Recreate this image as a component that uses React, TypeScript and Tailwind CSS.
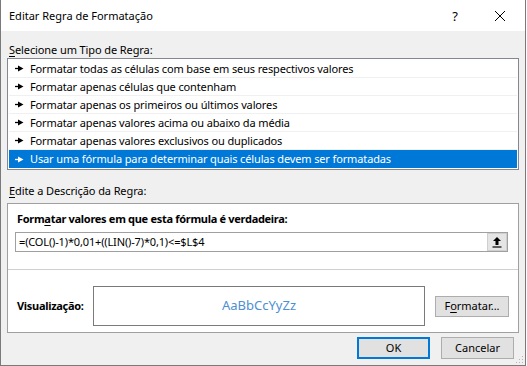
import React from "react";

const rows = [
  "Formatar todas as células com base em seus respectivos valores",
  "Formatar apenas células que contenham",
  "Formatar apenas os primeiros ou últimos valores",
  "Formatar apenas valores acima ou abaixo da média",
  "Formatar apenas valores exclusivos ou duplicados",
  "Usar uma fórmula para determinar quais células devem ser formatadas",
];

function Arrow({ color }: { color: string }) {
  return (
    <svg width="9" height="7" viewBox="0 0 9 7" className="shrink-0">
      <path d="M0 3.5H4" stroke={color} strokeWidth="1.3" />
      <path d="M3 0.5L8.5 3.5L3 6.5Z" fill={color} />
    </svg>
  );
}

export default function App() {
  const font = { fontFamily: '"Noto Sans", "Segoe UI", sans-serif' };
  return (
    <div
      className="w-[526px] h-[366px] bg-[#f0f0f0] border-l border-r border-b border-[#7a7a7a] flex flex-col text-[11px] text-black relative"
      style={font}
    >
      {/* title bar */}
      <div className="h-[31px] bg-white flex items-center pl-[8px] shrink-0">
        <span className="text-[11px] leading-[16px]">Editar Regra de Formatação</span>
        <span className="ml-auto w-[12px] text-center text-[13px] leading-[16px]">?</span>
        <div className="ml-[33px] mr-[19px] w-[12px] h-[12px] flex items-center justify-center">
          <svg width="12" height="12" viewBox="0 0 12 12">
            <path d="M1 1L11 11M11 1L1 11" stroke="#000" strokeWidth="1" />
          </svg>
        </div>
      </div>

      <div className="flex flex-col px-[6px]">
        <div className="mt-[11px] leading-[16px] pl-[2px] tracking-[-0.1px]">
          <span className="underline underline-offset-2">S</span>elecione um Tipo de Regra:
        </div>
        <div className="border border-[#828790] bg-white p-[1px] flex flex-col">
          {rows.map((r, i) => {
            const sel = i === rows.length - 1;
            return (
              <div
                key={i}
                className={
                  "h-[18px] flex items-center pl-[6px] gap-[6px] leading-[16px] tracking-[-0.13px] " +
                  (sel ? "bg-[#0078d7] text-white" : "border-b border-[#f0f0f0]")
                }
              >
                <Arrow color={sel ? "#ffffff" : "#000000"} />
                <span>{r}</span>
              </div>
            );
          })}
        </div>

        <div className="mt-[13px] leading-[16px] pl-[2px] tracking-[-0.1px]">
          <span className="underline underline-offset-2">E</span>dite a Descrição da Regra:
        </div>
        <div className="mt-[4px] h-[130px] border border-[#a0a0a0] bg-white flex flex-col">
          <div className="pt-[7px] pl-[9px] font-bold leading-[16px] tracking-[-0.3px]">
            Form<span className="underline underline-offset-2">a</span>tar valores em que esta fórmula é verdadeira:
          </div>
          <div className="mt-[5px] ml-[7px] mr-[10px] h-[20px] border border-[#a0a0a0] flex items-center">
            <span className="pl-[3px] leading-[16px] tracking-[-0.15px]">=(COL()-1)*0,01+((LIN()-7)*0,1)&lt;=$L$4</span>
            <div className="ml-auto w-[20px] h-[18px] bg-[#e5e5e5] border border-[#cfcfcf] flex items-center justify-center">
              <svg width="10" height="12" viewBox="0 0 10 12">
                <path d="M5 1L1 5H3.5V9H6.5V5H9Z" fill="#000" />
                <path d="M0.5 11H9.5" stroke="#000" strokeWidth="1.2" />
              </svg>
            </div>
          </div>
          <div className="mt-[17px] h-[1px] bg-[#d0d0d0]" />
          <div className="flex items-center pl-[9px] mt-[16px]">
            <span className="font-bold leading-[16px] w-[76px] tracking-[-0.3px]">Visualização:</span>
            <div className="w-[332px] h-[40px] border border-[#7a7a7a] flex items-center justify-center text-[#4c8fd3] text-[13px]">
              AaBbCcYyZz
            </div>
            <div className="ml-[10px] w-[74px] h-[21px] bg-[#e1e1e1] border border-[#adadad] flex items-center justify-center leading-[16px]">
              F<span className="underline underline-offset-2">o</span>rmatar...
            </div>
          </div>
        </div>

        <div className="mt-[4px] flex justify-end gap-[11px] pr-[5px]">
          <div className="w-[73px] h-[22px] bg-[#e1e1e1] border-2 border-[#0078d7] flex items-center justify-center leading-[16px]">
            OK
          </div>
          <div className="w-[73px] h-[22px] bg-[#e1e1e1] border border-[#adadad] flex items-center justify-center leading-[16px]">
            Cancelar
          </div>
        </div>
      </div>

      <svg width="10" height="10" viewBox="0 0 10 10" className="absolute right-[1px] bottom-[1px]">
        {[[8, 2], [8, 5], [5, 5], [8, 8], [5, 8], [2, 8]].map(([x, y], i) => (
          <rect key={i} x={x} y={y} width="1" height="1" fill="#b5b5b5" />
        ))}
      </svg>
    </div>
  );
}
